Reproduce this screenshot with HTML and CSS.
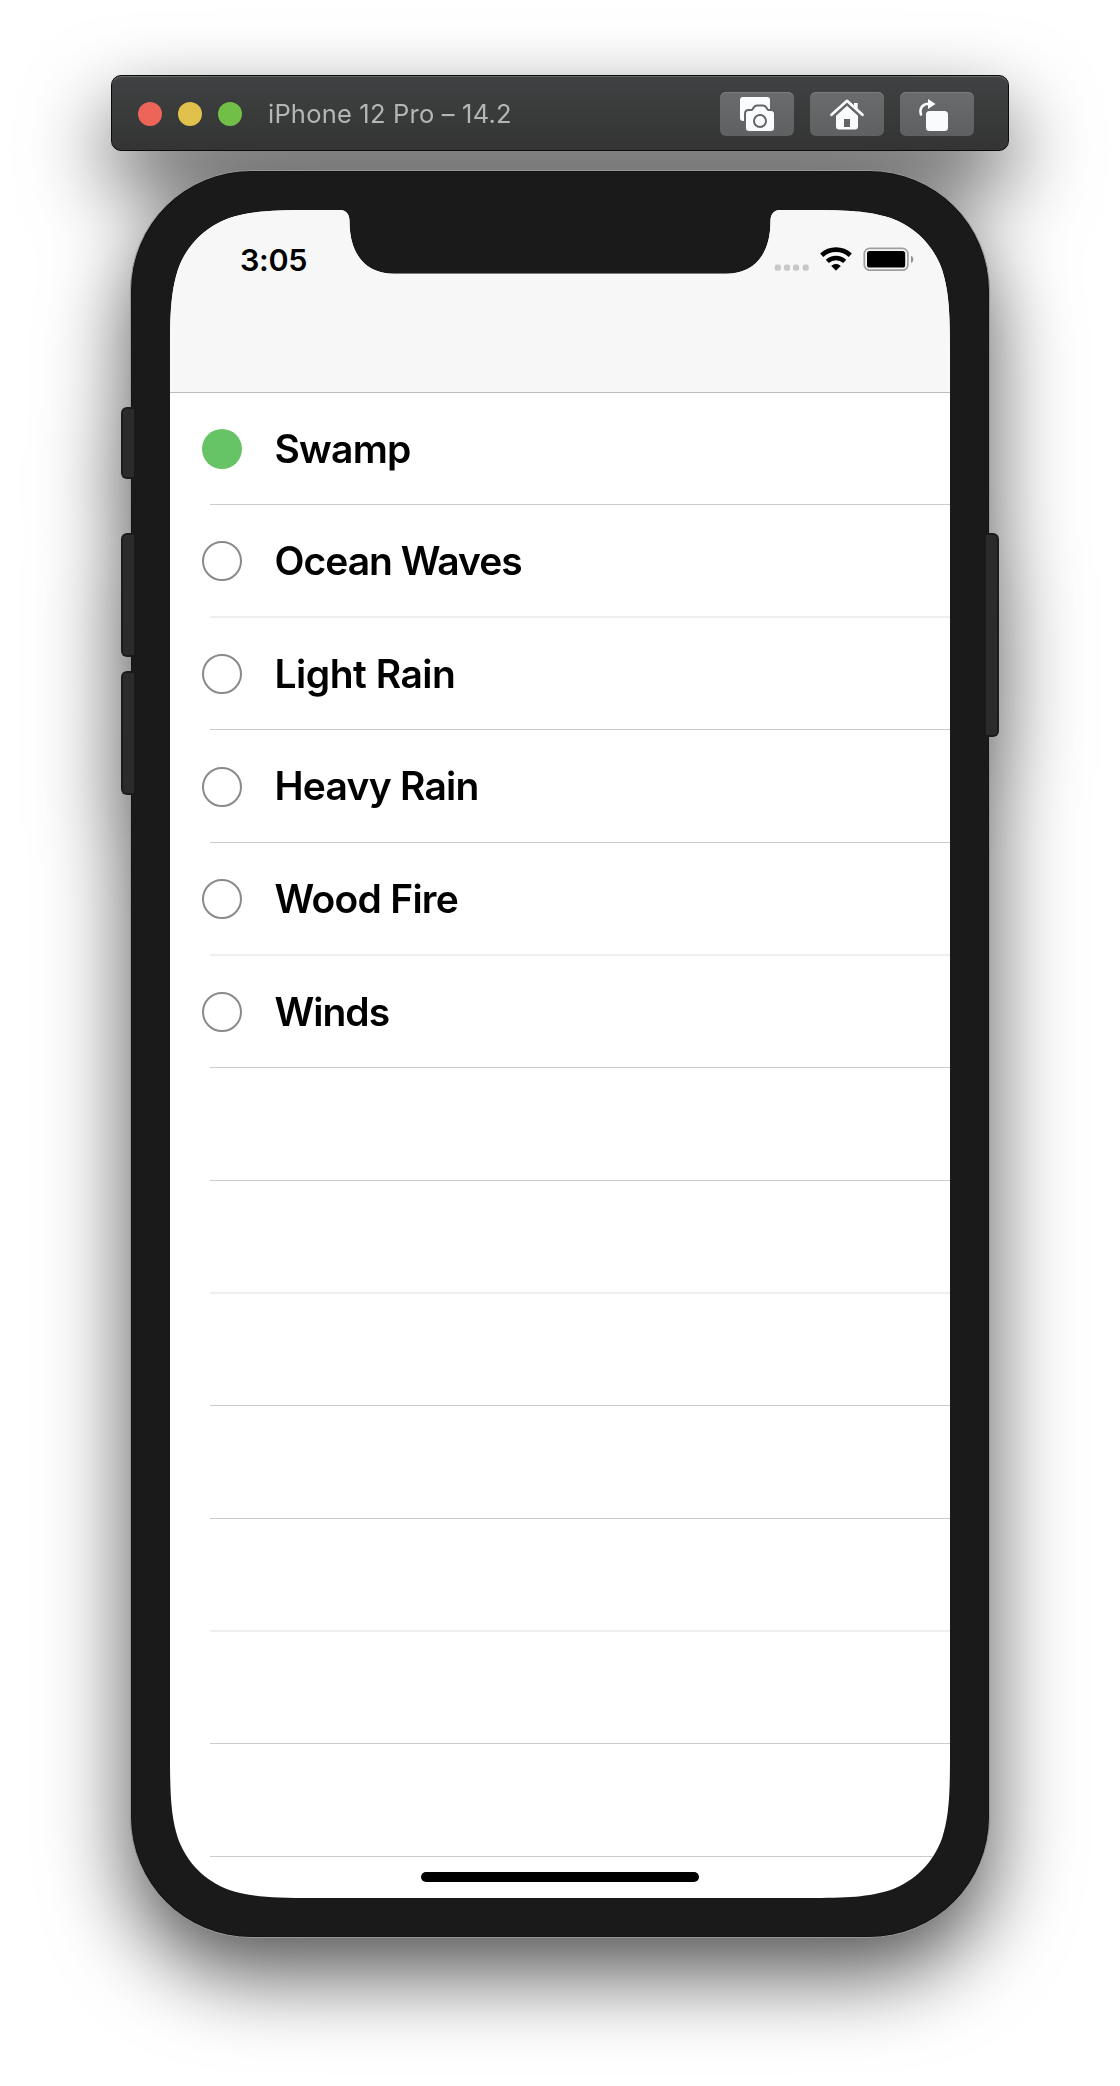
FILE: index.html
```html
<!DOCTYPE html>
<html lang="en">
<head>
<meta charset="utf-8">
<title>iPhone 12 Pro – 14.2</title>
<link rel="stylesheet" href="styles.css">
</head>
<body>
<main class="simulator">
  <header class="titlebar">
    <div class="lights">
      <span class="light close"></span>
      <span class="light minimize"></span>
      <span class="light zoom"></span>
    </div>
    <h1 class="title">iPhone 12 Pro – 14.2</h1>
    <div class="tools">
      <button class="tool" aria-label="Screenshot">
        <svg width="74" height="44" viewBox="0 0 74 44">
          <path fill="#fafbfc" d="M23 5H47a3 3 0 0 1 3 3V20L30 29H23a3 3 0 0 1-3-3V8a3 3 0 0 1 3-3Z"/>
          <path fill="#fafbfc" stroke="#646566" stroke-width="4" paint-order="stroke" d="M28.5 19H31.500Q33 19 34 17L34.500 16Q35.500 14.500 37 14.500H43Q44.500 14.500 45.500 16L46 17Q47 19 48.500 19H51a3 3 0 0 1 3 3V36a3 3 0 0 1-3 3H29a3 3 0 0 1-3-3V22Q26 19 28.500 19Z"/>
          <circle cx="40" cy="29" r="6" fill="none" stroke="#646566" stroke-width="2"/>
        </svg>
      </button>
      <button class="tool" aria-label="Home">
        <svg width="74" height="44" viewBox="0 0 74 44">
          <path fill="#fafbfc" fill-rule="evenodd" d="M37 13.500L48 23.500V34.500a3 3 0 0 1-3 3H29a3 3 0 0 1-3-3V23.500ZM34 27V35H40V27Z"/>
          <path fill="none" stroke="#656667" stroke-width="5.600" d="M21.500 23.800L37 9.800L52.500 23.800"/>
          <path fill="#fafbfc" d="M44 11H47.700V18L44 15Z"/>
          <path fill="none" stroke="#fafbfc" stroke-width="2.700" stroke-linecap="round" stroke-linejoin="round" d="M21.500 22.800L37 8.800L52.500 22.800"/>
        </svg>
      </button>
      <button class="tool" aria-label="Rotate">
        <svg width="74" height="44" viewBox="0 0 74 44">
          <rect x="26" y="19" width="22" height="20" rx="3.500" fill="#fafbfc"/>
          <path fill="none" stroke="#fafbfc" stroke-width="2.600" stroke-linecap="round" d="M21 22.500C19 16 23 11.700 29 11.700"/>
          <path fill="#fafbfc" d="M28 7L35.500 12L28 17Z"/>
        </svg>
      </button>
    </div>
  </header>

  <section class="phone">
    <i class="key mute"></i>
    <i class="key vol-up"></i>
    <i class="key vol-down"></i>
    <i class="key power"></i>
    <div class="screen">
      <div class="navbar">
        <div class="status">
          <time class="clock">3:05</time>
          <svg class="indicators" width="144" height="28" viewBox="0 0 144 28">
            <g fill="#c8c8c8">
              <rect x="4.700" y="18.600" width="6.200" height="6.200" rx="2.200"/>
              <rect x="13.900" y="18.600" width="6.200" height="6.200" rx="2.200"/>
              <rect x="23" y="18.600" width="6.200" height="6.200" rx="2.200"/>
              <rect x="32.600" y="18.600" width="6.200" height="6.200" rx="2.200"/>
            </g>
            <g fill="none" stroke="#000" stroke-width="4.600">
              <path d="M51.700 9.200A21 21 0 0 1 80.300 9.200"/>
              <path d="M57.300 15.400A13 13 0 0 1 74.700 15.400"/>
            </g>
            <path d="M61.700 20A6.500 6.500 0 0 1 70.300 20L66 24.300Z" stroke="#000" stroke-width=".8" stroke-linejoin="round"/>
            <rect x="94.300" y="2.400" width="43.600" height="21.800" rx="5.500" fill="none" stroke="#9f9f9f" stroke-width="1.700"/>
            <rect x="97" y="5" width="38.200" height="16.600" rx="2.600"/>
            <path fill="#8f8f8f" d="M141 9.700Q143.300 10.500 143.300 13.200T141 16.900Z"/>
          </svg>
        </div>
      </div>
      <ul class="sounds">
        <li class="row"><span class="dot on"></span><span class="label tight">Swamp</span></li>
        <li class="row soft"><span class="dot"></span><span class="label ocean">Ocean Waves</span></li>
        <li class="row"><span class="dot"></span><span class="label">Light Rain</span></li>
        <li class="row low"><span class="dot"></span><span class="label tight">Heavy Rain</span></li>
        <li class="row soft"><span class="dot"></span><span class="label tight">Wood Fire</span></li>
        <li class="row"><span class="dot"></span><span class="label ocean">Winds</span></li>
        <li class="row"></li>
        <li class="row soft"></li>
        <li class="row"></li>
        <li class="row"></li>
        <li class="row soft"></li>
        <li class="row"></li>
        <li class="row"></li>
      </ul>
      <div class="home-indicator"></div>
    </div>
  </section>
</main>
</body>
</html>
```
FILE: styles.css
```css
* { box-sizing: border-box; }

body {
  margin: 0;
  background: #fff;
  font-family: Inter, "Liberation Sans", sans-serif;
}

.simulator {
  width: 1120px;
  height: 2086px;
  padding-top: 75px;
  display: flex;
  flex-direction: column;
  align-items: center;
  gap: 19px;
  overflow: hidden;
  filter: drop-shadow(0 36px 42px rgba(0, 0, 0, .67));
}

.titlebar {
  width: 898px;
  height: 76px;
  padding: 2px 34px 0 26px;
  display: flex;
  align-items: center;
  border: 1px solid #090a0a;
  border-radius: 10px;
  background: linear-gradient(#404243, #333433);
  box-shadow: inset 0 1px 0 #686a6a;
}

.lights { display: flex; gap: 16px; }
.light { width: 24px; height: 24px; border-radius: 50%; }
.close { background: #ed6559; }
.minimize { background: #e0c14c; }
.zoom { background: #72bf47; }

.title {
  margin: 0 0 0 26px;
  color: #b4b5b6;
  font-size: 25.5px;
  font-weight: 400;
  line-height: 32px;
  letter-spacing: .2px;
  white-space: nowrap;
}

.tools { margin-left: auto; display: flex; gap: 16px; }
.tool {
  width: 74px;
  height: 44px;
  padding: 0;
  border: 0;
  border-radius: 6px;
  background: linear-gradient(#6a6b6c, #5f6061);
  box-shadow: inset 0 1px 0 #7c7d7e;
}
.tool svg { display: block; }

.phone {
  position: relative;
  width: 860px;
  height: 1768px;
  flex: none;
  padding: 39px;
  border: 1px solid #999;
  border-radius: 121px;
  background: #1a1a1a;
  box-shadow: inset 0 0 0 1px #141414;
}

.key {
  position: absolute;
  left: -10px;
  width: 13px;
  border: 2px solid #1c1c1c;
  border-right: 0;
  border-radius: 6px 0 0 6px;
  background: #2b2b2b;
}
.mute { top: 236px; height: 72px; }
.vol-up { top: 362px; height: 124px; }
.vol-down { top: 500px; height: 124px; }
.power {
  top: 362px;
  right: -10px;
  left: auto;
  height: 204px;
  border: 2px solid #1c1c1c;
  border-left: 0;
  border-radius: 0 6px 6px 0;
}

/* Continuous-curvature display corners with the sensor notch cut out. */
.screen {
  position: relative;
  width: 780px;
  height: 1688px;
  background: #fff;
  overflow: hidden;
  clip-path: path("M143.700 0H170C176 0 179.500 4 179.500 11C179.500 45 196 63.700 224 63.700H556C584 63.700 600.500 45 600.500 11C600.500 4 604 0 610 0H636.300C677.700 0 698.400 1 720.600 8C745 16.900 763.100 35 772 59.400C779 81.600 780 102.300 780 143.700V1544.300C780 1585.700 779 1606.400 772 1628.600C763.100 1653 745 1671.100 720.600 1680C698.400 1687 677.700 1688 636.300 1688H143.700C102.300 1688 81.600 1687 59.400 1680C35 1671.100 16.900 1653 8 1628.600C1 1606.400 0 1585.700 0 1544.300V143.700C0 102.300 1 81.600 8 59.400C16.900 35 35 16.900 59.400 8C81.600 1 102.300 0 143.700 0Z");
}

.navbar {
  height: 183px;
  border-bottom: 1px solid #bcbcbc;
  background: #f7f7f7;
}
.status {
  display: flex;
  justify-content: space-between;
  align-items: center;
  padding: 36px 36px 0 70px;
}
.clock {
  font-size: 30.5px;
  font-weight: 600;
  line-height: 28px;
  letter-spacing: -.3px;
}

.sounds { margin: 0; padding: 0; list-style: none; }
.row {
  height: 113px;
  padding: 36px 0 0 32px;
  display: flex;
  align-items: flex-start;
  gap: 32.5px;
  background: linear-gradient(#cbcbcb, #cbcbcb) 40px 100% / 100% 1px no-repeat;
}
.row:first-child, .row:nth-child(3n) { height: 112px; }
.soft { background: linear-gradient(#efefef, #efefef) 40px 100% / 100% 2px no-repeat; }
.low .dot { margin-top: .5px; }

.dot {
  width: 40px;
  height: 40px;
  border: 2px solid #8a8a8a;
  border-radius: 50%;
}
.on { border: 0; background: #66c466; }
.label {
  font-size: 39px;
  font-weight: 600;
  line-height: 40px;
  letter-spacing: -.5px;
  white-space: nowrap;
}
.ocean { letter-spacing: -1px; }
.tight { letter-spacing: -.75px; }

.home-indicator {
  position: absolute;
  left: 251px;
  bottom: 16px;
  width: 278px;
  height: 10px;
  border-radius: 5px;
  background: #000;
}
```
